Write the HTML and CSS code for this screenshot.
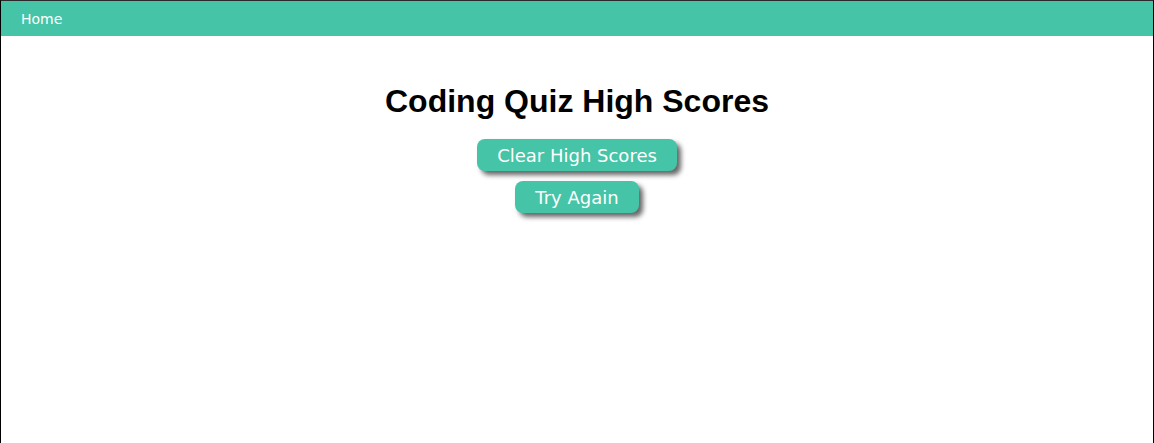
FILE: index.html
```html
<!DOCTYPE html>
<html lang="en">
<head>
<meta charset="utf-8">
<title>Coding Quiz High Scores</title>
<link rel="stylesheet" href="styles.css">
</head>
<body>
<div class="frame">
  <nav class="topbar">
    <a class="nav-link" href="#">Home</a>
  </nav>
  <main class="content">
    <h1 class="title">Coding Quiz High Scores</h1>
    <div class="actions">
      <button class="btn" type="button">Clear High Scores</button>
      <button class="btn" type="button">Try Again</button>
    </div>
  </main>
</div>
</body>
</html>
```

FILE: styles.css
```css
html, body {
  margin: 0;
  padding: 0;
  background: #ffffff;
}

.frame {
  box-sizing: border-box;
  height: 443px;
  border-top: 1px solid #2a2a2a;
  border-left: 1px solid #000000;
  border-right: 1px solid #000000;
  overflow: hidden;
}

.topbar {
  height: 35px;
  background: #45c4a7;
  display: flex;
  align-items: center;
  padding-left: 20px;
}

.nav-link {
  color: #ffffff;
  text-decoration: none;
  font-family: "DejaVu Sans", Verdana, sans-serif;
  font-size: 14px;
}

.content {
  display: flex;
  flex-direction: column;
  align-items: center;
}

.title {
  font-family: "Liberation Sans", Arial, sans-serif;
  font-weight: bold;
  font-size: 32px;
  margin: 47px 0 19px;
  line-height: 37px;
  color: #000000;
}

.actions {
  display: flex;
  flex-direction: column;
  align-items: center;
  gap: 10px;
}

.btn {
  background: #45c4a7;
  color: #ffffff;
  border: none;
  border-radius: 8px;
  height: 32px;
  padding: 0 20px;
  font-family: "DejaVu Sans", Verdana, sans-serif;
  font-size: 18px;
  box-shadow: 4px 4px 5px #666666;
  cursor: pointer;
}
```
